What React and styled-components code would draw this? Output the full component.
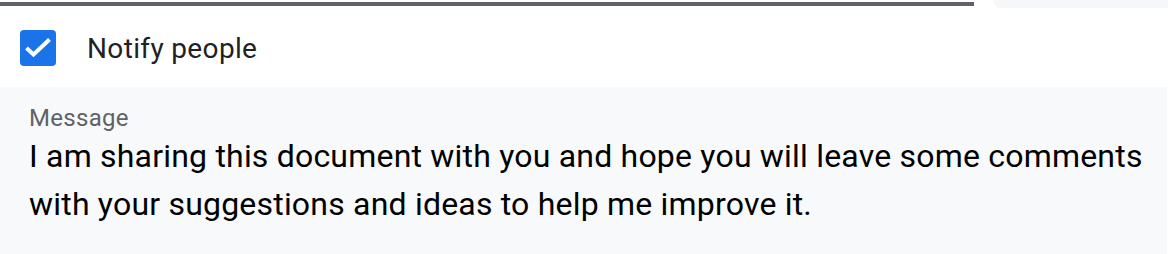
import React from 'react';
import styled, { createGlobalStyle } from 'styled-components';

const GlobalStyle = createGlobalStyle`
    body {
        margin: 0;
        background: #ffffff;
        font-family: Roboto, "Liberation Sans", Arial, sans-serif;
    }
`;

const Page = styled.div`
    width: 1168px;
    height: 254px;
    overflow: hidden;
    display: flex;
    flex-direction: column;
`;

// 위쪽 줄: 진행 막대 + 오른쪽 입력칸 아랫부분
const TopStrip = styled.div`
    display: flex;
    height: 8px;
`;

const Progress = styled.div`
    width: 974px;
    height: 4px;
    margin-top: 2px;
    background-color: #5f6368;
`;

const FieldTail = styled.div`
    flex: 1;
    margin-left: 19px;
    background-color: #f6f7f9;
    border-bottom-left-radius: 10px;
`;

const NotifyRow = styled.label`
    display: flex;
    align-items: center;
    height: 36px;
    margin-top: 22px;
    padding-left: 20px;
    gap: 31px;
    cursor: pointer;
`;

const CheckBox = styled.span`
    width: 36px;
    height: 36px;
    border-radius: 4px;
    background-color: ${(props) => (props.checked ? '#1a73e8' : '#ffffff')};
    border: ${(props) => (props.checked ? 'none' : '4px solid #5f6368')};
    box-sizing: border-box;
    display: flex;
    align-items: center;
    justify-content: center;
`;

const NotifyText = styled.span`
    font-size: 28px;
    color: #202124;
    letter-spacing: 0.35px;
`;

const MessageBox = styled.div`
    flex: 1;
    margin-top: 21px;
    width: 1167px;
    box-sizing: border-box;
    padding: 17px 12px 0 29px;
    background-color: #f8f9fa;
`;

const Label = styled.div`
    font-size: 24px;
    line-height: 28px;
    color: #5f6368;
    letter-spacing: 0.3px;
`;

const Body = styled.div`
    font-size: 32px;
    line-height: 48px;
    color: #000000;
    letter-spacing: 0.2px;
`;

const App = () => {
    const [notify, setNotify] = React.useState(true);

    return (
        <Page>
            <GlobalStyle />
            <TopStrip>
                <Progress />
                <FieldTail />
            </TopStrip>

            <NotifyRow onClick={() => setNotify(!notify)}>
                <CheckBox checked={notify}>
                    {notify && (
                        <svg width="36" height="36" viewBox="0 0 36 36">
                            <path d="M6.5 18 L13.5 24.5 L29.5 9.5" fill="none" stroke="#ffffff" strokeWidth="4" />
                        </svg>
                    )}
                </CheckBox>
                <NotifyText>Notify people</NotifyText>
            </NotifyRow>

            <MessageBox>
                <Label>Message</Label>
                <Body>
                    I am sharing this document with you and hope you will leave some comments with your suggestions and ideas to help me improve it.
                </Body>
            </MessageBox>
        </Page>
    );
};

export default App;
